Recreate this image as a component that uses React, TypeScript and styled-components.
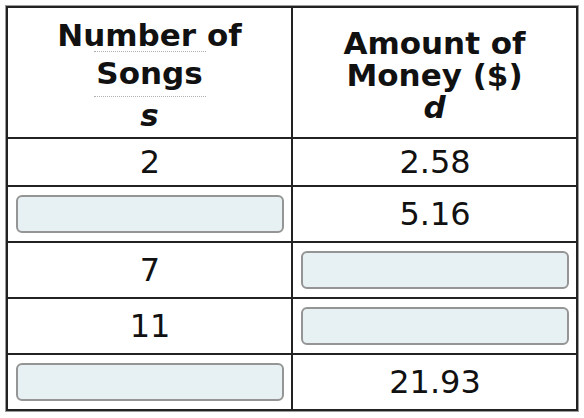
import * as React from "react"
import styled, { createGlobalStyle } from "styled-components"

const GlobalStyle = createGlobalStyle`
  body {
    margin: 0;
    background: #fff;
    font-family: "DejaVu Sans", Verdana, sans-serif;
  }
`

const Page = styled.div`
  padding: 6px;
`

const Table = styled.table`
  width: 572px;
  table-layout: fixed;
  border-collapse: collapse;
  border: 2px solid #1c1c1c;
  box-shadow: 0 0 0 1px #9a9a9a;
  color: #111;
`

const HeadCell = styled.th`
  height: 125px;
  border: 2px solid #222;
  padding: 4px 0 0;
  vertical-align: middle;
  font-size: 31px;
  font-weight: bold;
`

const HeadStack = styled.div`
  display: flex;
  flex-direction: column;
  align-items: center;
  line-height: 32px;
`

const Dots = styled.div<{ before: number; after: number }>`
  width: 112px;
  border-top: 1px dotted #b0b0b0;
  margin: ${props => `${props.before}px 0 ${props.after}px`};
`

const Variable = styled.i`
  font-style: italic;
  font-weight: bold;
`

const Row = styled.tr<{ short?: boolean }>`
  height: ${props => (props.short ? "48px" : "56px")};
`

const Cell = styled.td`
  border: 2px solid #222;
  padding: 0 7px 0 8px;
  text-align: center;
  vertical-align: middle;
  font-size: 32px;
`

const Blank = styled.input`
  display: block;
  box-sizing: border-box;
  width: 100%;
  height: 38px;
  margin: 0;
  border: 2px solid #959595;
  border-radius: 6px;
  background: #e7f0f3;
  outline: none;
`

type Value = number | string | null

const rows: [Value, Value][] = [
  [2, "2.58"],
  [null, "5.16"],
  [7, null],
  [11, null],
  [null, "21.93"],
]

const App = () => (
  <Page>
    <GlobalStyle />
    <Table>
      <thead>
        <tr>
          <HeadCell>
            <HeadStack>
              <span>Number of</span>
              <Dots before={0} after={5} />
              <span>Songs</span>
              <Dots before={7} after={2} />
              <Variable>s</Variable>
            </HeadStack>
          </HeadCell>
          <HeadCell>
            <HeadStack>
              <span>Amount of</span>
              <span>Money ($)</span>
              <Variable>d</Variable>
            </HeadStack>
          </HeadCell>
        </tr>
      </thead>
      <tbody>
        {rows.map(([songs, money], i) => (
          <Row key={i} short={songs !== null && money !== null}>
            <Cell>{songs === null ? <Blank aria-label="number of songs" /> : songs}</Cell>
            <Cell>{money === null ? <Blank aria-label="amount of money" /> : money}</Cell>
          </Row>
        ))}
      </tbody>
    </Table>
  </Page>
)

export default App
